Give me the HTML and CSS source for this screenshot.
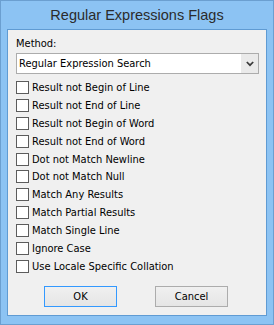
FILE: index.html
```
<!DOCTYPE html>
<html>
<head>
  <meta charset="utf-8">
  <title>Regular Expressions Flags</title>
  <link rel="stylesheet" href="styles.css">
</head>
<body>
  <div class="window">
    <div class="title">Regular Expressions Flags</div>

    <div class="client">
      <div class="field-label">Method:</div>
      <div class="combo">
        <span class="combo-text">Regular Expression Search</span>
        <span class="combo-btn">
          <svg width="8" height="6" viewBox="0 0 8 6">
            <polyline points="0.8,1 4,4.2 7.2,1" fill="none" stroke="#3a3a3a" stroke-width="1.7"/>
          </svg>
        </span>
      </div>

      <ul class="flags">
        <li><span class="check"></span>Result not Begin of Line</li>
        <li><span class="check"></span>Result not End of Line</li>
        <li><span class="check"></span>Result not Begin of Word</li>
        <li><span class="check"></span>Result not End of Word</li>
        <li><span class="check"></span>Dot not Match Newline</li>
        <li><span class="check"></span>Dot not Match Null</li>
        <li><span class="check"></span>Match Any Results</li>
        <li><span class="check"></span>Match Partial Results</li>
        <li><span class="check"></span>Match Single Line</li>
        <li><span class="check"></span>Ignore Case</li>
        <li><span class="check"></span>Use Locale Specific Collation</li>
      </ul>

      <div class="buttons">
        <button class="btn default">OK</button>
        <button class="btn">Cancel</button>
      </div>
    </div>
  </div>
</body>
</html>
```

FILE: styles.css
```
body {
  margin: 0;
  padding: 0;
  background: #ffffff;
  font-family: 'DejaVu Sans Condensed', 'DejaVu Sans', sans-serif;
  font-size: 11px;
  color: #000;
}

.window {
  width: 274px;
  height: 325px;
  box-sizing: border-box;
  background: #8cc3f3;
  border: 1px solid #6b9fd0;
  padding: 0 6px 7px 6px;
}

.title {
  height: 28px;
  line-height: 29px;
  text-align: center;
  font-family: 'Liberation Sans', Arial, sans-serif;
  font-size: 14.5px;
  color: #2b2b2b;
}

.client {
  height: 287px;
  box-sizing: border-box;
  background: #f0f0f0;
  border: 1px solid #5f9bd3;
  padding: 7px 7px 0 8px;
}

.field-label {
  line-height: 13px;
  margin-bottom: 3px;
}

.combo {
  display: flex;
  height: 21px;
  box-sizing: border-box;
  border: 1px solid #acacac;
  background: #ffffff;
}

.combo-text {
  flex: 1;
  line-height: 19px;
  padding-left: 2px;
}

.combo-btn {
  width: 17px;
  background: #eaeaea;
  display: flex;
  align-items: center;
  justify-content: center;
}

.flags {
  list-style: none;
  margin: 7px 0 0 0;
  padding: 0;
}

.flags li {
  height: 17.875px;
  display: flex;
  align-items: flex-start;
  line-height: 13px;
}

.check {
  width: 13px;
  height: 13px;
  box-sizing: border-box;
  border: 1px solid #5c5c5c;
  background: #fff;
  margin-right: 3px;
}

.buttons {
  display: flex;
  gap: 38px;
  padding-left: 28px;
  margin-top: 8.4px;
}

.btn {
  width: 73px;
  height: 21px;
  box-sizing: border-box;
  border: 1px solid #acacac;
  background: linear-gradient(#f0f0f0, #e5e5e5);
  font-family: 'DejaVu Sans Condensed', 'DejaVu Sans', sans-serif;
  font-size: 11px;
  color: #000;
  padding: 0;
}

.btn.default {
  border-color: #3399ff;
}
```
